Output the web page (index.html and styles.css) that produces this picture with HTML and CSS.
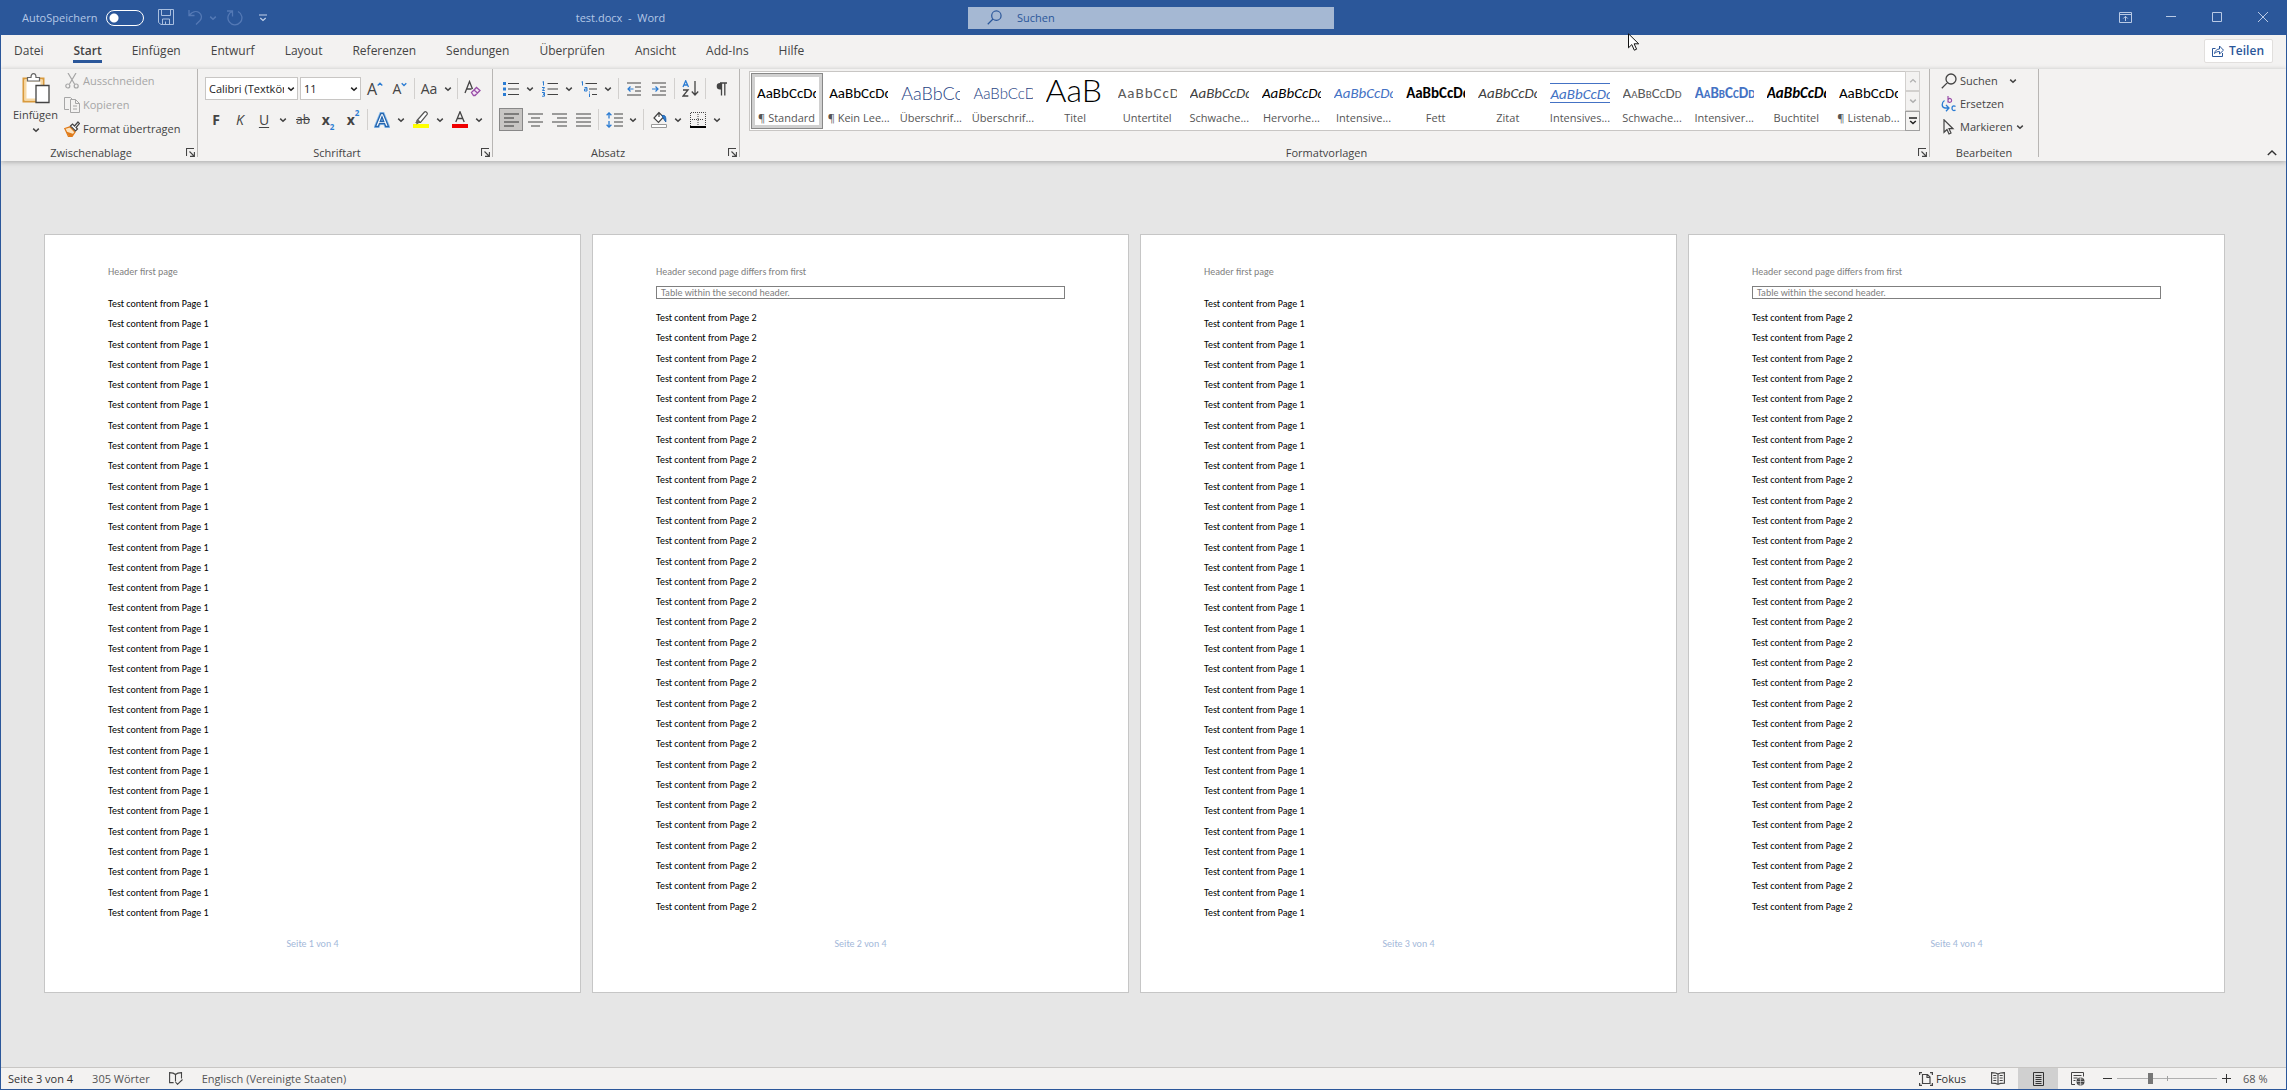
FILE: index.html
```html
<!DOCTYPE html>
<html lang="de">
<head>
<meta charset="utf-8">
<meta name="viewport" content="width=device-width, initial-scale=1">
<title>test.docx - Word</title>
<link rel="stylesheet" href="styles.css">
</head>
<body>
<svg class="sprite" aria-hidden="true">
  <symbol id="chev" viewBox="0 0 8 8"><path d="M1.2 2.6 4 5.2 6.8 2.6" fill="none" stroke="currentColor" stroke-width="1.5"/></symbol>
  <symbol id="launch" viewBox="0 0 9 9"><path d="M.5 8V.5H8M3.5 3.5 8 8M8.4 4v4.4H4" fill="none" stroke="#444" stroke-width="1.1"/></symbol>
  <symbol id="lens" viewBox="0 0 16 16"><path d="M6.4 9.6.8 15.2M15 6a5 5 0 1 1-10 0 5 5 0 0 1 10 0Z" fill="none" stroke="currentColor" stroke-width="1.3"/></symbol>
</svg>

<header class="titlebar">
  <div class="title-left">
    <div class="quick">
      <label class="autosave">AutoSpeichern <input type="checkbox" class="switch"></label>
      <button class="q save" aria-label="Speichern"><svg width="17" height="17" viewBox="0 0 17 17"><path d="M.5.5h15v15H3L.5 13.500V.5ZM3.500.5v6h9v-6M4.500 15.500v-5.500h7v5.500M7.500 12.500v3" fill="none" stroke="#a9bfe0"/></svg></button>
      <button class="q undo" aria-label="Rückgängig"><svg width="15" height="17" viewBox="0 0 15 17"><path d="M1 1v5.500h5.500M1.300 6.200C4 2.800 8 1.500 11 3.500c3 2.200 3.200 5.500 1 8L8 15.500" fill="none" stroke="#5479b5" stroke-width="1.300"/></svg></button>
      <button class="q mini" aria-label="Rückgängig-Liste"><svg width="8" height="8" class="dim"><use href="#chev"/></svg></button>
      <button class="q redo" aria-label="Wiederholen"><svg width="17" height="17" viewBox="0 0 17 17"><path d="M1 2h5.500v5.500M6.300 2.300A7 7 0 1 0 12 2.500" fill="none" stroke="#5479b5" stroke-width="1.300"/></svg></button>
      <button class="q" aria-label="Symbolleiste anpassen"><svg width="8" height="8" viewBox="0 0 8 8"><path d="M0 1h8M1.300 4 4 6.500 6.700 4" fill="none" stroke="#c3d2ea" stroke-width="1.200"/></svg></button>
    </div>
    <h1 class="doc-title">test.docx&nbsp; -&nbsp; Word</h1>
  </div>
  <label class="search"><svg width="15" height="15"><use href="#lens"/></svg><input type="search" placeholder="Suchen" aria-label="Suchen"></label>
  <div class="window-buttons">
    <button aria-label="Menüband-Anzeigeoptionen"><svg width="13" height="11" viewBox="0 0 13 11"><path d="M.5.5h12v10H.5ZM.5 2.500h12M6.500 9V4.500M4.300 6.500l2.200-2.200 2.200 2.200" fill="none" stroke="#b9cae5"/></svg></button>
    <button aria-label="Minimieren"><svg width="10" height="10" viewBox="0 0 10 10"><path d="M0 4.500h10" stroke="#b9cae5"/></svg></button>
    <button aria-label="Maximieren"><svg width="10" height="10" viewBox="0 0 10 10"><path d="M.5.5h9v9h-9Z" fill="none" stroke="#b9cae5"/></svg></button>
    <button aria-label="Schließen"><svg width="10" height="10" viewBox="0 0 10 10"><path d="M0 0l10 10M10 0 0 10" stroke="#b9cae5"/></svg></button>
  </div>
</header>

<nav class="tabs">
  <a href="#">Datei</a><a href="#" class="active">Start</a><a href="#">Einfügen</a><a href="#">Entwurf</a><a href="#">Layout</a><a href="#">Referenzen</a><a href="#">Sendungen</a><a href="#">Überprüfen</a><a href="#">Ansicht</a><a href="#">Add-Ins</a><a href="#">Hilfe</a>
  <button class="share"><svg width="12" height="12" viewBox="0 0 12 12"><path d="M3.500 3.500h-3v8h10V8M2.500 8.500C3 5.500 5 4 7.500 4V1l4 4.200-4 3.800V6.500C5.500 6.500 4 7 2.500 8.500Z" fill="none" stroke="#2b579a"/></svg>Teilen</button>
</nav>

<div class="ribbon">
  <section class="group clipboard">
    <div class="group-body clip-body">
      <button class="paste"><svg width="28" height="31" viewBox="0 0 28 31"><path d="M1.500 5.500h20v23h-20Z" fill="#fff" stroke="#d99a3c" stroke-width="2"/><path d="M3.500 7.500h16v19h-16Z" fill="#fff" stroke="#f8d9a4" stroke-width="2"/><path d="M5.500 8V4.500h3.500C9 2 10 .7 11.500.7S14 2 14 4.500h3.500V8Z" fill="#fff" stroke="#666" stroke-width="1.200"/><path d="M14 12.500h13v17H14Z" fill="#fff" stroke="#444" stroke-width="1.300"/></svg><span>Einfügen</span><svg width="8" height="8"><use href="#chev"/></svg></button>
      <div class="stack">
        <button disabled><svg width="16" height="16" viewBox="0 0 16 16"><path d="M4 0l6.500 11M12 0 5.500 11M5.800 13a2 2 0 1 1-4 0 2 2 0 0 1 4 0ZM14.200 13a2 2 0 1 1-4 0 2 2 0 0 1 4 0Z" fill="none" stroke="#a6a6a6" stroke-width="1.200"/></svg>Ausschneiden</button>
        <button disabled><svg width="16" height="16" viewBox="0 0 16 16"><path d="M5 12.500H.5v-12h6L8 2M6.500 2.500h5l4 4v9h-9ZM11.500 2.500v4h4M9 9h4M9 12h4" fill="none" stroke="#a6a6a6"/></svg>Kopieren</button>
        <button><svg width="16" height="16" viewBox="0 0 16 16"><path d="M.8 7.500 6 5.800l5 5.200-3 4.500H4.500Z" fill="#fbe3c0" stroke="#e07b1a" stroke-width="1.300"/><path d="M2 10.500l3 4.500 3 .5 1.500-2.500Z" fill="#e07b1a"/><path d="M6.500 5 8.500 3l2 2L14 1l1.500 1.500-3.500 4 1.500 1.500-2 2Z" fill="#fff" stroke="#444" stroke-width="1.200"/></svg>Format übertragen</button>
      </div>
    </div>
    <footer><h2>Zwischenablage</h2><button aria-label="Zwischenablage öffnen"><svg width="9" height="9"><use href="#launch"/></svg></button></footer>
  </section>

  <section class="group font">
    <div class="group-body rows">
      <div class="tools">
        <label class="combo name"><select aria-label="Schriftart"><option>Calibri (Textkörper)</option></select><svg width="8" height="8"><use href="#chev"/></svg></label>
        <label class="combo size"><select aria-label="Schriftgrad"><option>11</option></select><svg width="8" height="8"><use href="#chev"/></svg></label>
        <button class="tool grow" aria-label="Schrift vergrößern">A<svg width="6" height="14" viewBox="0 0 6 14"><path d="M.7 3.500 3 1.200l2.300 2.300" fill="none" stroke="#2b7cd3" stroke-width="1.300"/></svg></button>
        <button class="tool shrink" aria-label="Schrift verkleinern">A<svg width="6" height="14" viewBox="0 0 6 14"><path d="M.7 1.200 3 3.500l2.300-2.300" fill="none" stroke="#2b7cd3" stroke-width="1.300"/></svg></button>
        <i class="sep"></i>
        <button class="split case" aria-label="Groß-/Kleinschreibung"><span>Aa</span><svg width="8" height="8"><use href="#chev"/></svg></button>
        <i class="sep"></i>
        <button class="tool" aria-label="Formatierung löschen"><svg width="17" height="17" viewBox="0 0 17 17"><path d="M1 13 5.500 1.500 8.500 9M2.500 9h5" fill="none" stroke="#444" stroke-width="1.300"/><path d="M7.500 12.500l5-5 3.500 3-5 5H9.500ZM10 10l3.500 3" fill="#f3e6f5" stroke="#9a4fa8" stroke-width="1.300"/></svg></button>
      </div>
      <div class="tools">
        <div class="joined">
          <button class="tool bold">F</button>
          <button class="tool italic">K</button>
          <button class="split underline"><span>U</span><svg width="8" height="8"><use href="#chev"/></svg></button>
        </div>
        <button class="tool strike">ab</button>
        <button class="tool script">x<sub>2</sub></button>
        <button class="tool script">x<sup>2</sup></button>
        <i class="sep"></i>
        <button class="split" aria-label="Texteffekte"><span><svg width="16" height="16" viewBox="0 0 16 16"><path d="M1.500 14.500 6.800 1.500h2.400l5.300 13h-2.800l-1.200-3H5.500l-1.200 3ZM6.300 9.300h3.400L8 4.800Z" fill="#fff" stroke="#8fc0ee" stroke-width="3"/><path d="M1.500 14.500 6.800 1.500h2.400l5.300 13h-2.800l-1.200-3H5.500l-1.200 3ZM6.300 9.300h3.400L8 4.800Z" fill="#fff" stroke="#2565ae" stroke-width="1.300"/></svg></span><svg width="8" height="8"><use href="#chev"/></svg></button>
        <button class="split" aria-label="Texthervorhebung"><span><svg width="16" height="17" viewBox="0 0 16 17"><path d="M0 13h16v4H0Z" fill="#ff0"/><path d="M4 9.500 11.500 1c1-1 3.500 1 2.600 2.300L7.500 11.500H5.700L4 12.500Z" fill="#fff" stroke="#555" stroke-width="1.200"/><path d="M2 12l3-3.500 2.500 2L5.500 12Z" fill="#666"/></svg></span><svg width="8" height="8"><use href="#chev"/></svg></button>
        <button class="split" aria-label="Schriftfarbe"><span><svg width="16" height="17" viewBox="0 0 16 17"><path d="M0 13h16v4H0Z" fill="#f00000"/><path d="M3.800 11 8 .800 12.200 11M5.200 7.500h5.600" fill="none" stroke="#444" stroke-width="1.300"/></svg></span><svg width="8" height="8"><use href="#chev"/></svg></button>
      </div>
    </div>
    <footer><h2>Schriftart</h2><button aria-label="Schriftart öffnen"><svg width="9" height="9"><use href="#launch"/></svg></button></footer>
  </section>

  <section class="group paragraph">
    <div class="group-body rows">
      <div class="tools">
        <button class="split" aria-label="Aufzählungszeichen"><span><svg width="16" height="16" viewBox="0 0 16 16"><path d="M0 1h3v3H0ZM0 6.500h3v3H0ZM0 12h3v3H0Z" fill="#2b7cd3"/><path d="M5 2.500h11M5 8h11M5 13.500h11" stroke="#444" stroke-width="1.200"/></svg></span><svg width="8" height="8"><use href="#chev"/></svg></button>
        <button class="split" aria-label="Nummerierung"><span><svg width="16" height="16" viewBox="0 0 16 16"><path d="M.5 1 1.500.5v4M0 6.500h2.500L.5 9.500h2.300M0 11.500h2.500v1.700H1 2.500v2H0" fill="none" stroke="#2b7cd3"/><path d="M5.500 2.500H16M5.500 8H16M5.500 13.500H16" stroke="#444" stroke-width="1.200"/></svg></span><svg width="8" height="8"><use href="#chev"/></svg></button>
        <button class="split" aria-label="Liste mit mehreren Ebenen"><span><svg width="16" height="16" viewBox="0 0 16 16"><path d="M.5 1 1.500.5v4M3.500 6.500H6V10H3.500V8H6M8.500 10.500v1M8.500 12.500V16" fill="none" stroke="#2b7cd3"/><path d="M4.500 2.500H16M8 8h8M11 13.500h5" stroke="#444" stroke-width="1.200"/></svg></span><svg width="8" height="8"><use href="#chev"/></svg></button>
        <i class="sep"></i>
        <button class="tool" aria-label="Einzug verkleinern"><svg width="15" height="14" viewBox="0 0 15 14"><path d="M0 1h14M8 5h6M8 9h6M0 13h14" stroke="#444"/><path d="M6.500 7H1M3.500 4.500 1 7l2.500 2.500" fill="none" stroke="#2b7cd3" stroke-width="1.200"/></svg></button>
        <button class="tool" aria-label="Einzug vergrößern"><svg width="15" height="14" viewBox="0 0 15 14"><path d="M0 1h14M8 5h6M8 9h6M0 13h14" stroke="#444"/><path d="M0 7h5.500M3.500 4.500 6 7 3.500 9.500" fill="none" stroke="#2b7cd3" stroke-width="1.200"/></svg></button>
        <i class="sep"></i>
        <button class="tool" aria-label="Sortieren"><svg width="17" height="17" viewBox="0 0 17 17"><path d="M1 7 3.700.800 6.500 7M2 5h3.500" fill="none" stroke="#2b7cd3" stroke-width="1.300"/><path d="M1 10h5l-5 6h5.300M13 1v14M9.800 11.500 13 15l3.200-3.500" fill="none" stroke="#444" stroke-width="1.300"/></svg></button>
        <i class="sep"></i>
        <button class="tool" aria-label="Alle anzeigen"><svg width="11" height="14" viewBox="0 0 11 14"><path d="M5 1H4a3.300 3.300 0 0 0 0 6.600h1Z" fill="#444"/><path d="M4 1h7M5.500 1v12.500M8.800 1v12.500" stroke="#444" stroke-width="1.300"/></svg></button>
      </div>
      <div class="tools">
        <div class="joined">
          <button class="tool pressed" aria-label="Linksbündig"><svg width="15" height="14" viewBox="0 0 15 14"><path d="M0 1h15M0 5h10M0 9h15M0 13h10" stroke="#333" stroke-width="1.200"/></svg></button>
          <button class="tool" aria-label="Zentriert"><svg width="15" height="14" viewBox="0 0 15 14"><path d="M0 1h15M3 5h9M0 9h15M3 13h9" stroke="#444" stroke-width="1.200"/></svg></button>
          <button class="tool" aria-label="Rechtsbündig"><svg width="15" height="14" viewBox="0 0 15 14"><path d="M0 1h15M5 5h10M0 9h15M5 13h10" stroke="#444" stroke-width="1.200"/></svg></button>
          <button class="tool" aria-label="Blocksatz"><svg width="15" height="14" viewBox="0 0 15 14"><path d="M0 1h15M0 5h15M0 9h15M0 13h15" stroke="#444" stroke-width="1.200"/></svg></button>
        </div>
        <i class="sep"></i>
        <button class="split" aria-label="Zeilenabstand"><span><svg width="17" height="16" viewBox="0 0 17 16"><path d="M3 1v5.500M3 9v6M.6 3.300 3 .9l2.400 2.400M.6 12.700 3 15.100l2.400-2.400" fill="none" stroke="#2b7cd3" stroke-width="1.300"/><path d="M8 2h9M8 6h9M8 10h9M8 14h9" stroke="#444" stroke-width="1.200"/></svg></span><svg width="8" height="8"><use href="#chev"/></svg></button>
        <i class="sep"></i>
        <button class="split" aria-label="Schattierung"><span><svg width="17" height="17" viewBox="0 0 17 17"><path d="M.5 13.500h15v3H.5Z" fill="#fff" stroke="#999"/><path d="M8 1.500 3 7l4.500 4.500 5-5.500ZM8 1v5" fill="#fff" stroke="#444" stroke-width="1.200"/><path d="M11 4.500c3.500-.5 4 1 3.800 6.500l-2-3Z" fill="#2b7cd3" stroke="#1d5fa8"/></svg></span><svg width="8" height="8"><use href="#chev"/></svg></button>
        <button class="split" aria-label="Rahmen"><span><svg width="16" height="16" viewBox="0 0 16 16"><path d="M.5 14V.5h15V14M8 2v11M2 7.500h12" fill="none" stroke="#444" stroke-dasharray="1 1"/><path d="M0 15h16" stroke="#000" stroke-width="2"/></svg></span><svg width="8" height="8"><use href="#chev"/></svg></button>
      </div>
    </div>
    <footer><h2>Absatz</h2><button aria-label="Absatz öffnen"><svg width="9" height="9"><use href="#launch"/></svg></button></footer>
  </section>

  <section class="group styles">
    <div class="group-body">
      <div class="gallery">
        <div class="tiles">
          <button class="tile selected"><span class="preview"><span>AaBbCcDdEe</span></span><span class="name">¶ Standard</span></button>
          <button class="tile"><span class="preview"><span>AaBbCcDdEe</span></span><span class="name">¶ Kein Lee...</span></button>
          <button class="tile"><span class="preview head1"><span>AaBbCc</span></span><span class="name">Überschrif...</span></button>
          <button class="tile"><span class="preview head2"><span>AaBbCcD</span></span><span class="name">Überschrif...</span></button>
          <button class="tile"><span class="preview title"><span>AaB</span></span><span class="name">Titel</span></button>
          <button class="tile"><span class="preview subtitle"><span>AaBbCcD</span></span><span class="name">Untertitel</span></button>
          <button class="tile"><span class="preview slanted soft"><span>AaBbCcDdEe</span></span><span class="name">Schwache...</span></button>
          <button class="tile"><span class="preview slanted"><span>AaBbCcDdEe</span></span><span class="name">Hervorhe...</span></button>
          <button class="tile"><span class="preview slanted accent"><span>AaBbCcDdEe</span></span><span class="name">Intensive...</span></button>
          <button class="tile"><span class="preview heavy"><span>AaBbCcDdEe</span></span><span class="name">Fett</span></button>
          <button class="tile"><span class="preview slanted soft"><span>AaBbCcDdEe</span></span><span class="name">Zitat</span></button>
          <button class="tile"><span class="preview slanted accent ruled"><span>AaBbCcDdEe</span></span><span class="name">Intensives...</span></button>
          <button class="tile"><span class="preview caps faint"><span>AaBbCcDdEe</span></span><span class="name">Schwache...</span></button>
          <button class="tile"><span class="preview caps heavy accent"><span>AaBbCcDdEe</span></span><span class="name">Intensiver...</span></button>
          <button class="tile"><span class="preview slanted heavy"><span>AaBbCcDdEe</span></span><span class="name">Buchtitel</span></button>
          <button class="tile"><span class="preview"><span>AaBbCcDdEe</span></span><span class="name">¶ Listenab...</span></button>
        </div>
        <div class="scroller">
          <button aria-label="Nach oben"><svg width="8" height="8" viewBox="0 0 8 8"><path d="M1.200 5.200 4 2.600l2.800 2.600" fill="none" stroke="#b0b0b0" stroke-width="1.300"/></svg></button>
          <button aria-label="Nach unten"><svg width="8" height="8" class="pale"><use href="#chev"/></svg></button>
          <button class="more" aria-label="Weitere"><svg width="8" height="8" viewBox="0 0 8 8"><path d="M0 1h8M1.200 4 4 6.600 6.800 4" fill="none" stroke="#222" stroke-width="1.500"/></svg></button>
        </div>
      </div>
    </div>
    <footer><h2>Formatvorlagen</h2><button aria-label="Formatvorlagen öffnen"><svg width="9" height="9"><use href="#launch"/></svg></button></footer>
  </section>

  <section class="group editing">
    <div class="group-body stack">
      <button><svg width="16" height="16"><use href="#lens"/></svg>Suchen<svg class="far" width="8" height="8"><use href="#chev"/></svg></button>
      <button><svg width="16" height="16" viewBox="0 0 16 16"><path d="M7 0v6.500M7 4.300a1.800 2 0 1 1 0 .2" fill="none" stroke="#9a4fa8" stroke-width="1.200"/><path d="M14.500 10.500c-2-1.500-3.500 0-3.500 1.700s1.500 3.300 3.500 1.800" fill="none" stroke="#2b7cd3" stroke-width="1.300"/><path d="M3.500 4.500C.5 6.500.2 11.500 4 12h4M5 9l3 3-3 3.200" fill="none" stroke="#2b7cd3" stroke-width="1.300"/></svg>Ersetzen</button>
      <button><svg width="16" height="16" viewBox="0 0 16 16"><path d="M3 .8v12.500l3-2.800 2 4.500 2-1-2-4.300h4Z" fill="none" stroke="#444" stroke-width="1.200"/></svg>Markieren<svg width="8" height="8"><use href="#chev"/></svg></button>
    </div>
    <footer><h2>Bearbeiten</h2></footer>
  </section>

  <button class="collapse" aria-label="Menüband reduzieren"><svg width="10" height="8" viewBox="0 0 10 8"><path d="M.8 6 5 2l4.200 4" fill="none" stroke="#333" stroke-width="1.400"/></svg></button>
</div>

<main class="canvas">
  <article class="page">
    <header>Header first page</header>
    <div class="text">
      <p>Test content from Page 1</p><p>Test content from Page 1</p><p>Test content from Page 1</p><p>Test content from Page 1</p><p>Test content from Page 1</p>
      <p>Test content from Page 1</p><p>Test content from Page 1</p><p>Test content from Page 1</p><p>Test content from Page 1</p><p>Test content from Page 1</p>
      <p>Test content from Page 1</p><p>Test content from Page 1</p><p>Test content from Page 1</p><p>Test content from Page 1</p><p>Test content from Page 1</p>
      <p>Test content from Page 1</p><p>Test content from Page 1</p><p>Test content from Page 1</p><p>Test content from Page 1</p><p>Test content from Page 1</p>
      <p>Test content from Page 1</p><p>Test content from Page 1</p><p>Test content from Page 1</p><p>Test content from Page 1</p><p>Test content from Page 1</p>
      <p>Test content from Page 1</p><p>Test content from Page 1</p><p>Test content from Page 1</p><p>Test content from Page 1</p><p>Test content from Page 1</p>
      <p>Test content from Page 1</p>
    </div>
    <footer>Seite 1 von 4</footer>
  </article>
  <article class="page even">
    <header>Header second page differs from first<table><tr><td>Table within the second header.</td></tr></table></header>
    <div class="text">
      <p>Test content from Page 2</p><p>Test content from Page 2</p><p>Test content from Page 2</p><p>Test content from Page 2</p><p>Test content from Page 2</p>
      <p>Test content from Page 2</p><p>Test content from Page 2</p><p>Test content from Page 2</p><p>Test content from Page 2</p><p>Test content from Page 2</p>
      <p>Test content from Page 2</p><p>Test content from Page 2</p><p>Test content from Page 2</p><p>Test content from Page 2</p><p>Test content from Page 2</p>
      <p>Test content from Page 2</p><p>Test content from Page 2</p><p>Test content from Page 2</p><p>Test content from Page 2</p><p>Test content from Page 2</p>
      <p>Test content from Page 2</p><p>Test content from Page 2</p><p>Test content from Page 2</p><p>Test content from Page 2</p><p>Test content from Page 2</p>
      <p>Test content from Page 2</p><p>Test content from Page 2</p><p>Test content from Page 2</p><p>Test content from Page 2</p><p>Test content from Page 2</p>
    </div>
    <footer>Seite 2 von 4</footer>
  </article>
  <article class="page">
    <header>Header first page</header>
    <div class="text">
      <p>Test content from Page 1</p><p>Test content from Page 1</p><p>Test content from Page 1</p><p>Test content from Page 1</p><p>Test content from Page 1</p>
      <p>Test content from Page 1</p><p>Test content from Page 1</p><p>Test content from Page 1</p><p>Test content from Page 1</p><p>Test content from Page 1</p>
      <p>Test content from Page 1</p><p>Test content from Page 1</p><p>Test content from Page 1</p><p>Test content from Page 1</p><p>Test content from Page 1</p>
      <p>Test content from Page 1</p><p>Test content from Page 1</p><p>Test content from Page 1</p><p>Test content from Page 1</p><p>Test content from Page 1</p>
      <p>Test content from Page 1</p><p>Test content from Page 1</p><p>Test content from Page 1</p><p>Test content from Page 1</p><p>Test content from Page 1</p>
      <p>Test content from Page 1</p><p>Test content from Page 1</p><p>Test content from Page 1</p><p>Test content from Page 1</p><p>Test content from Page 1</p>
      <p>Test content from Page 1</p>
    </div>
    <footer>Seite 3 von 4</footer>
  </article>
  <article class="page even">
    <header>Header second page differs from first<table><tr><td>Table within the second header.</td></tr></table></header>
    <div class="text">
      <p>Test content from Page 2</p><p>Test content from Page 2</p><p>Test content from Page 2</p><p>Test content from Page 2</p><p>Test content from Page 2</p>
      <p>Test content from Page 2</p><p>Test content from Page 2</p><p>Test content from Page 2</p><p>Test content from Page 2</p><p>Test content from Page 2</p>
      <p>Test content from Page 2</p><p>Test content from Page 2</p><p>Test content from Page 2</p><p>Test content from Page 2</p><p>Test content from Page 2</p>
      <p>Test content from Page 2</p><p>Test content from Page 2</p><p>Test content from Page 2</p><p>Test content from Page 2</p><p>Test content from Page 2</p>
      <p>Test content from Page 2</p><p>Test content from Page 2</p><p>Test content from Page 2</p><p>Test content from Page 2</p><p>Test content from Page 2</p>
      <p>Test content from Page 2</p><p>Test content from Page 2</p><p>Test content from Page 2</p><p>Test content from Page 2</p><p>Test content from Page 2</p>
    </div>
    <footer>Seite 4 von 4</footer>
  </article>
</main>

<footer class="status">
  <button class="strong">Seite 3 von 4</button>
  <button>305 Wörter</button>
  <button aria-label="Rechtschreibprüfung"><svg width="14" height="13" viewBox="0 0 14 13"><path d="M6.500 2.500C5 1 3 .6.600.6v10h4M6.500 2.500C8 1 10 .6 12.500.6v6M6.500 2.500v7M6.500 10l2 2.300 5-4.800" fill="none" stroke="#444" stroke-width="1.100"/></svg></button>
  <button>Englisch (Vereinigte Staaten)</button>
  <div class="view">
    <button class="focus strong"><svg width="14" height="14" viewBox="0 0 14 14"><path d="M3 .6H.6V3M.6 11v2.400H3M11 .6h2.400V3M13.400 11v2.400H11M3.500 2.500h5l2.500 2.500v6.500H3.500ZM8 2.500v3h3" fill="none" stroke="#444" stroke-width="1.200"/></svg>Fokus</button>
    <button class="mode" aria-label="Lesemodus"><svg width="14" height="13" viewBox="0 0 14 13"><path d="M7 2C5.500.8 3 .6.600.6v10.500C3 11.100 5.500 11.300 7 12.400c1.500-1.100 4-1.300 6.400-1.300V.6C11 .6 8.500.8 7 2ZM7 2v10M2.300 3.500h3M2.300 6h3M2.300 8.500h3M8.700 3.500h3M8.700 6h3M8.700 8.500h3" fill="none" stroke="#444" stroke-width="1.100"/></svg></button>
    <button class="mode on" aria-label="Seitenlayout"><svg width="11" height="14" viewBox="0 0 11 14"><path d="M.5.5h10v13H.5ZM2.500 3.500h6M2.500 5.500h6M2.500 7.500h6M2.500 9.500h6M2.500 11.500h6" fill="none" stroke="#333"/></svg></button>
    <button class="mode" aria-label="Weblayout"><svg width="14" height="14" viewBox="0 0 14 14"><path d="M4 12.500H.5V.5h12v4M2.500 3.500h8M2.500 6h4M2.500 8.500h2" fill="none" stroke="#444"/><circle cx="9.500" cy="9.500" r="4" fill="#444"/><path d="M5.500 9.500h8M9.500 5.500v8M7.300 7h4.400M7.300 12h4.400" stroke="#eee" stroke-width=".6"/></svg></button>
    <button class="step" aria-label="Verkleinern"><svg width="9" height="9" viewBox="0 0 9 9"><path d="M0 4.500h9" stroke="#333"/></svg></button>
    <input type="range" class="zoom" min="0" max="100" value="33" aria-label="Zoom">
    <button class="step" aria-label="Vergrößern"><svg width="9" height="9" viewBox="0 0 9 9"><path d="M0 4.500h9M4.500 0v9" stroke="#333"/></svg></button>
    <button class="percent">68 %</button>
  </div>
</footer>

<svg class="pointer" width="12" height="18" viewBox="0 0 12 18" aria-hidden="true"><path d="M.5.8v14l3.300-3.200 2.500 5.600 2.300-1-2.500-5.400h4.600Z" fill="#fff" stroke="#111"/></svg>
</body>
</html>
```
FILE: styles.css
```css
* { box-sizing: border-box; }

body {
  margin: 0;
  min-height: 100vh;
  display: flex;
  flex-direction: column;
  border: solid #2b579a;
  border-width: 0 1px 1px;
  background: #e6e6e6;
  color: #444;
  font: 11px/16px "Open Sans", "Segoe UI", sans-serif;
}

button, input, select {
  margin: 0;
  padding: 0;
  border: 0;
  background: none;
  color: inherit;
  font: inherit;
}

h1, h2, p { margin: 0; font: inherit; }
svg { display: block; flex: none; }
.sprite { position: absolute; width: 0; height: 0; }

/* Title bar */
.titlebar {
  display: grid;
  grid-template-columns: 967fr 366px 952fr;
  align-items: center;
  height: 35px;
  background: #2b579a;
  color: #b4c7e6;
}
.title-left { display: flex; align-items: center; }
.quick { display: flex; align-items: center; width: 272px; padding-left: 21px; }
.autosave { display: flex; align-items: center; gap: 9px; }
.switch {
  appearance: none;
  width: 38px;
  height: 16px;
  border: 1px solid #fff;
  border-radius: 8px;
  background: radial-gradient(circle at 7px 7px, #fff 4px, transparent 5px);
}
.save { margin-left: 14px; }
.undo { margin-left: 13px; }
.mini { margin: 0 9px 0 6px; }
.redo { margin-right: 16px; }
.dim { color: #5479b5; }
.pale { color: #b0b0b0; }
.doc-title { flex: 1; text-align: center; font-size: 11px; }
.search {
  display: flex;
  align-items: center;
  gap: 15px;
  height: 22px;
  padding-left: 19px;
  background: #a5b8d3;
  color: #2b579a;
}
.search input { flex: 1; outline: 0; }
.search input::placeholder { color: #2b579a; opacity: 1; }
.window-buttons { display: flex; justify-content: flex-end; }
.window-buttons button { display: flex; justify-content: center; width: 46px; }

/* Ribbon tabs */
.tabs {
  display: flex;
  align-items: center;
  gap: 30px;
  height: 34px;
  padding: 0 13px 2px;
  background: #f3f2f1;
  font-size: 12px;
}
.tabs a {
  padding-top: 3px;
  border-bottom: 3px solid transparent;
  color: #444;
  line-height: 18px;
  text-decoration: none;
}
.tabs .active { border-color: #2b579a; font-weight: 600; }
.share {
  display: flex;
  align-items: center;
  gap: 5px;
  height: 24px;
  margin-left: auto;
  padding: 0 8px 0 7px;
  border: 1px solid #e1dfdd;
  border-radius: 2px;
  background: #fff;
  color: #2b579a;
  font-weight: 600;
}

/* Ribbon */
.ribbon {
  display: flex;
  height: 92px;
  padding-bottom: 4px;
  background: #f3f2f1;
  box-shadow: 0 1px 5px #0004;
}
.group { display: flex; flex-direction: column; flex: none; border-right: 1px solid #b8b6b4; }
.clipboard { width: 197px; }
.font { width: 295px; }
.paragraph { width: 247px; }
.styles { flex: 1; min-width: 0; }
.editing { width: 109px; }
.group-body { flex: 1; }
.group footer { display: flex; align-items: center; height: 9px; line-height: 9px; }
.group h2 { flex: 1; text-align: center; }
.group footer button { display: flex; justify-content: flex-end; width: 16px; padding-right: 2px; }

.clip-body { display: flex; }
.paste { display: flex; flex: none; flex-direction: column; align-items: center; width: 63px; padding: 4px 0 0 6px; gap: 4px; line-height: 14px; }
.stack { display: flex; flex-direction: column; align-items: flex-start; }
.stack button { display: flex; align-items: center; gap: 3px; height: 24px; white-space: nowrap; }
.stack button:disabled { color: #a6a6a6; }
.editing .stack { padding-left: 11px; }
.editing .stack button { height: 23px; }
.stack .far { margin-left: 8px; }

.rows { display: flex; flex-direction: column; gap: 8px; padding: 8px 0 0 6px; }
.tools { display: flex; gap: 1px; height: 23px; align-items: center; }
.joined { display: flex; }
.tool { display: flex; justify-content: center; align-items: center; width: 24px; height: 23px; }
.split { display: flex; align-items: center; width: 38px; height: 23px; }
.split > span { display: flex; justify-content: center; width: 24px; }
.split > svg { margin-left: 3px; }
.sep { width: 1px; height: 21px; margin: 0 1px; background: #d2d0ce; }
.paragraph .sep { margin: 0 2px; }
.pressed { border: 1px solid #888; background: #c8c6c4; }

.combo {
  display: flex;
  align-items: center;
  height: 23px;
  padding: 0 2px 0 3px;
  border: 1px solid #c8c6c4;
  background: #fff;
  color: #222;
}
.combo select { appearance: none; flex: 1; min-width: 0; outline: 0; font-size: 11px; }
.combo.name { width: 93px; margin: 0 1px; }
.combo.size { width: 61px; margin-right: 1px; }
.combo svg { margin: 0 0 0 3px; }
.grow { font-size: 16px; }
.shrink { font-size: 14px; }
.case { font-size: 14px; }
.bold { font-size: 14px; font-weight: 700; }
.italic { font-size: 14px; font-style: italic; }
.underline span { font-size: 14px; text-decoration: underline; text-underline-offset: 2px; }
.strike { font-size: 12px; text-decoration: line-through; }
.script { font-size: 14px; font-weight: 700; }
.script sub, .script sup { color: #2b7cd3; font-size: 8px; line-height: 9px; }
.script sub { align-self: flex-end; }
.script sup { align-self: flex-start; }

/* Style gallery */
.styles .group-body { padding: 2px 9px 0; }
.gallery { display: flex; height: 60px; border: 1px solid #c8c6c4; border-right: 0; background: #fff; }
.tiles { display: grid; grid-template-columns: repeat(16, minmax(0, 1fr)); flex: 1; padding: 1px 0 1px 1px; }
.tile { display: flex; flex-direction: column; gap: 4px; padding: 7px 7px 3px 6px; }
.tile.selected { outline: 1px solid #888; outline-offset: -1px; box-shadow: inset 0 0 0 4px #d0d0d0; }
.tile .name { align-self: center; color: #555; white-space: nowrap; }
.preview {
  width: 100%;
  height: 26px;
  overflow: hidden;
  color: #000;
  font: 15px/26px Carlito, Calibri, Lato, sans-serif;
  text-align: left;
  white-space: nowrap;
}
.head1 { color: #1f4484; font-family: Lato, sans-serif; font-size: 18px; font-weight: 300; }
.head2 { color: #1f4484; font-family: Lato, sans-serif; font-size: 15px; font-weight: 300; }
.title { font-family: Lato, sans-serif; font-size: 32px; font-weight: 300; line-height: 20px; }
.subtitle { color: #5a5a5a; letter-spacing: 1px; }
.slanted { font-style: italic; }
.heavy { font-weight: 700; }
.soft { color: #404040; }
.faint { color: #5a5a5a; }
.accent { color: #4472c4; }
.caps { font-variant: small-caps; }
.ruled span { display: block; height: 20px; margin-top: 3px; border: solid #4472c4; border-width: 1px 0; line-height: 20px; }
.scroller { display: flex; flex-direction: column; width: 15px; margin: -1px 0; }
.scroller button { display: flex; flex: 1; align-items: center; justify-content: center; border: 1px solid #d2d0ce; background: #f3f2f1; }
.scroller .more { border-color: #a0a0a0; }

.collapse { display: flex; align-self: flex-end; justify-content: flex-end; width: 247px; padding-right: 9px; }

/* Document pages */
.canvas {
  display: grid;
  grid-template-columns: repeat(4, minmax(0, 1fr));
  align-items: start;
  gap: 11px;
  flex: 1;
  padding: 73px 61px 73px 43px;
}
.page {
  display: flex;
  flex-direction: column;
  aspect-ratio: 537 / 759;
  padding: 31px 63px 42px;
  border: 1px solid #c6c6c6;
  background: #fff;
  color: #000;
  font: 10px/12px Carlito, Calibri, Lato, sans-serif;
}
.page header { color: #7f7f7f; }
.page table { width: 100%; margin-top: 8px; border: 1px solid #7f7f7f; border-spacing: 0; }
.page td { padding: 0 4px; line-height: 11px; }
.text { display: flex; flex: 1; flex-direction: column; justify-content: space-between; margin: 20px 0 19px; }
.even .text { margin: 13px 0 25px; }
.page footer { color: #a3b8d9; text-align: center; }

/* Status bar */
.status {
  display: flex;
  align-items: stretch;
  gap: 19px;
  height: 22px;
  padding-left: 7px;
  border-top: 1px solid #c8c6c4;
  background: #f3f2f1;
  color: #555;
}
.status button { display: flex; align-items: center; }
.status .strong { color: #333; }
.view { display: flex; align-items: stretch; margin-left: auto; }
.status .focus { gap: 3px; margin-right: 12px; }
.view .mode { justify-content: center; width: 40px; }
.view .on { background: #d0d0d0; }
.view .step { justify-content: center; width: 19px; }
.zoom {
  appearance: none;
  align-self: center;
  width: 100px;
  height: 11px;
  background:
    linear-gradient(#a0a0a0, #a0a0a0) center / 1px 5px no-repeat,
    linear-gradient(#b0b0b0, #b0b0b0) center / 100% 1px no-repeat;
}
.zoom::-webkit-slider-thumb { appearance: none; width: 5px; height: 11px; background: #767676; }
.zoom::-moz-range-thumb { width: 5px; height: 11px; border: 0; border-radius: 0; background: #767676; }
.view .percent { width: 50px; padding-left: 7px; }

/* Mouse pointer */
.pointer { position: absolute; left: 1628px; top: 33px; }
```
